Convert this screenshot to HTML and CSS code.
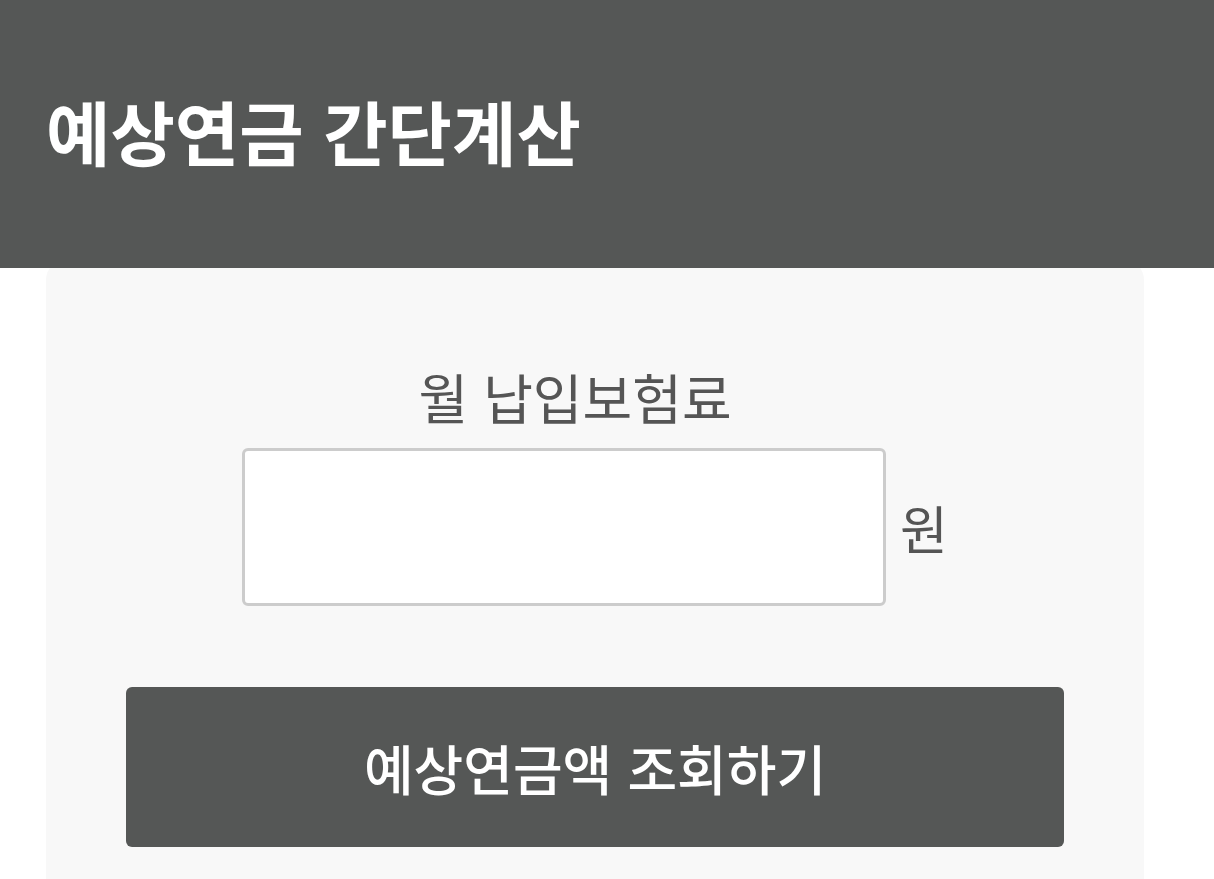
FILE: index.html
```html
<!DOCTYPE html>
<html lang="ko">
<head>
    <meta charset="UTF-8">
    <meta name="viewport" content="width=device-width, initial-scale=1.0">
    <title>예상연금 간단계산</title>
    <link rel="stylesheet" href="styles.css">
</head>
<body>

    <!-- 상단 제목 -->
    <header class="top-bar">
        <h1>예상연금 간단계산</h1>
    </header>

    <!-- 계산 영역 -->
    <div class="calc-box">
        <label class="calc-label" for="premium">월 납입보험료</label>
        <div class="input-row">
            <input type="text" id="premium" class="calc-input">
            <span class="unit">원</span>
        </div>
        <button class="calc-btn">예상연금액 조회하기</button>
    </div>

</body>
</html>
```

FILE: styles.css
```css
body {
    font-family: "Noto Sans CJK KR", "Noto Sans", sans-serif;
    background-color: #fff;
    margin: 0;
    padding: 0;
}

.top-bar {
    position: relative;
    z-index: 1;
    background-color: #555756;
    height: 268px;
    padding: 0 46px;
    box-sizing: border-box;
    display: flex;
    align-items: center;
}

.top-bar h1 {
    margin: 0 0 8px 0;
    color: #fff;
    font-size: 70px;
    font-weight: 700;
}

.calc-box {
    width: 1098px;
    margin: -8px 0 0 46px;
    padding: 102px 80px 60px;
    background-color: #f8f8f8;
    border-radius: 20px;
    display: flex;
    flex-direction: column;
    align-items: center;
    min-height: 700px;
    box-sizing: border-box;
}

.calc-label {
    font-size: 54px;
    line-height: 70px;
    color: #555;
    margin-right: 40px;
}

.input-row {
    display: flex;
    align-items: center;
    gap: 14px;
    margin-top: 16px;
}

.calc-input {
    width: 644px;
    height: 158px;
    box-sizing: border-box;
    border: 3px solid #ccc;
    border-radius: 6px;
    background-color: #fff;
    font-size: 48px;
    padding: 0 20px;
}

.unit {
    font-size: 52px;
    color: #555;
}

.calc-btn {
    margin-top: 81px;
    width: 100%;
    height: 160px;
    border: none;
    border-radius: 6px;
    background-color: #555756;
    color: #fff;
    font-family: inherit;
    font-size: 54px;
    font-weight: 500;
    cursor: pointer;
}
```
